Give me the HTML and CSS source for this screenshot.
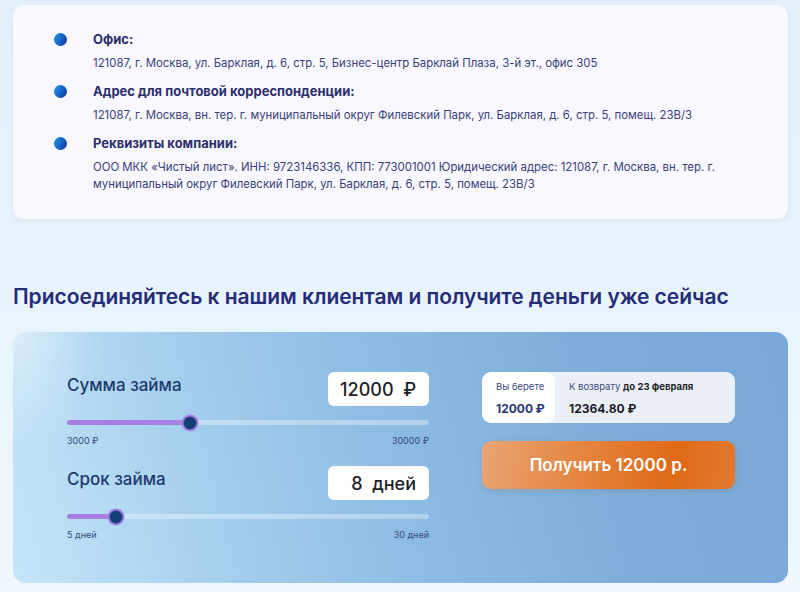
FILE: index.html
```html
<!DOCTYPE html>
<html lang="ru">
<head>
<meta charset="utf-8">
<link rel="stylesheet" href="styles.css">
</head>
<body>
<div class="page">
  <section class="info-card">
    <div class="info-row">
      <span class="dot"></span>
      <div class="info-body">
        <div class="info-title">Офис:</div>
        <div class="info-text">121087, г. Москва, ул. Барклая, д. 6, стр. 5, Бизнес-центр Барклай Плаза, 3-й эт., офис 305</div>
      </div>
    </div>
    <div class="info-row">
      <span class="dot"></span>
      <div class="info-body">
        <div class="info-title">Адрес для почтовой корреспонденции:</div>
        <div class="info-text">121087, г. Москва, вн. тер. г. муниципальный округ Филевский Парк, ул. Барклая, д. 6, стр. 5, помещ. 23В/3</div>
      </div>
    </div>
    <div class="info-row">
      <span class="dot"></span>
      <div class="info-body">
        <div class="info-title">Реквизиты компании:</div>
        <div class="info-text">ООО МКК «Чистый лист». ИНН: 9723146336, КПП: 773001001 Юридический адрес: 121087, г. Москва, вн. тер. г. муниципальный округ Филевский Парк, ул. Барклая, д. 6, стр. 5, помещ. 23В/3</div>
      </div>
    </div>
  </section>

  <h2 class="heading">Присоединяйтесь к нашим клиентам и получите деньги уже сейчас</h2>

  <section class="calc">
    <div class="calc-left">
      <div class="field">
        <div class="field-head">
          <span class="field-label">Сумма займа</span>
          <span class="field-value">12000&nbsp;&nbsp;₽</span>
        </div>
        <div class="slider">
          <div class="slider-fill" style="width: 34%"></div>
          <span class="slider-thumb" style="left: 34%"></span>
        </div>
        <div class="slider-limits"><span>3000 ₽</span><span>30000 ₽</span></div>
      </div>
      <div class="field">
        <div class="field-head">
          <span class="field-label">Срок займа</span>
          <span class="field-value">8&nbsp;&nbsp;дней</span>
        </div>
        <div class="slider">
          <div class="slider-fill" style="width: 13.5%"></div>
          <span class="slider-thumb" style="left: 13.5%"></span>
        </div>
        <div class="slider-limits"><span>5 дней</span><span>30 дней</span></div>
      </div>
    </div>
    <div class="calc-right">
      <div class="summary">
        <div class="sum-take">
          <div class="sum-label">Вы берете</div>
          <div class="sum-value">12000 ₽</div>
        </div>
        <div class="sum-return">
          <div class="sum-label">К возврату <b>до 23 февраля</b></div>
          <div class="sum-value dark">12364.80 ₽</div>
        </div>
      </div>
      <button class="get-btn">Получить 12000 р.</button>
    </div>
  </section>
</div>
</body>
</html>
```

FILE: styles.css
```css
* { box-sizing: border-box; }
html, body { margin: 0; padding: 0; }
body {
  width: 800px;
  height: 592px;
  overflow: hidden;
  font-family: Inter, "Noto Sans", sans-serif;
  background: linear-gradient(180deg, #e2f1fb 0%, #e8f4fc 50%, #f0f8fe 100%);
}
.page {
  padding: 5px 12px 0 13px;
}
.info-card {
  background: #f8f8fe;
  border-radius: 11px;
  padding: 26px 20px 26px 41px;
  box-shadow: 0 2px 6px rgba(120, 150, 200, 0.12);
  display: flex;
  flex-direction: column;
  gap: 11px;
}
.info-row {
  display: flex;
  gap: 26px;
}
.dot {
  flex: none;
  width: 13px;
  height: 13px;
  border-radius: 50%;
  margin-top: 2px;
  background: linear-gradient(120deg, #1a9be6 0%, #1666c8 50%, #0c2f8a 100%);
}
.info-title {
  font-size: 13px;
  font-weight: 700;
  color: #2d2f6b;
  line-height: 16px;
}
.info-text {
  margin-top: 8px;
  font-size: 11.4px;
  color: #3c3f7c;
  line-height: 17px;
}
.heading {
  margin: 64px 0 0 0;
  font-size: 21px;
  font-weight: 600;
  color: #262c78;
  line-height: 28px;
  letter-spacing: -0.05px;
}
.calc {
  margin-top: 21px;
  height: 251px;
  border-radius: 13px;
  background:
    radial-gradient(ellipse 90px 120px at 0% 0%, rgba(255,255,255,0.45), rgba(255,255,255,0) 100%),
    linear-gradient(75deg, #c6e6f9 0%, #a6cfee 25%, #8cbbe4 50%, #7eadd9 75%, #7aa9d8 100%);
  display: flex;
  padding: 40px 53px 0 54px;
  gap: 53px;
}
.calc-left {
  width: 362px;
  display: flex;
  flex-direction: column;
  gap: 20px;
}
.field-head {
  display: flex;
  justify-content: space-between;
  align-items: flex-start;
}
.field-label {
  font-size: 17px;
  font-weight: 500;
  color: #1d3a6c;
  margin-top: 3px;
}
.field-value {
  width: 101px;
  height: 34px;
  background: #fff;
  border-radius: 6px;
  display: flex;
  align-items: center;
  justify-content: flex-end;
  padding-right: 13px;
  font-size: 18px;
  font-weight: 500;
  color: #1e1e28;
}
.slider {
  position: relative;
  margin-top: 14px;
  height: 5px;
  border-radius: 3px;
  background: rgba(255, 255, 255, 0.35);
}
.slider-fill {
  height: 100%;
  border-radius: 3px;
  background: #a57fe2;
}
.slider-thumb {
  position: absolute;
  top: 50%;
  width: 17px;
  height: 17px;
  border-radius: 50%;
  background: #153e77;
  border: 2px solid #a57fe2;
  transform: translate(-50%, -50%);
}
.slider-limits {
  display: flex;
  justify-content: space-between;
  margin-top: 10px;
  font-size: 9px;
  color: #34497d;
}
.calc-right {
  width: 253px;
  display: flex;
  flex-direction: column;
  gap: 18px;
}
.summary {
  display: flex;
  height: 51px;
  border-radius: 9px;
  background: #ebf0f8;
  overflow: hidden;
}
.sum-take {
  width: 73px;
  background: #fff;
  border-radius: 9px;
  padding: 9px 0 0 14px;
}
.sum-return {
  padding: 9px 0 0 14px;
}
.sum-label {
  font-size: 9.5px;
  color: #3b4a82;
  line-height: 12px;
}
.sum-label b { color: #1d1d28; font-weight: 700; }
.sum-value {
  margin-top: 8px;
  font-size: 12px;
  font-weight: 700;
  color: #2b3572;
}
.sum-value.dark { color: #1d1d28; }
.get-btn {
  height: 48px;
  border: none;
  border-radius: 9px;
  background: linear-gradient(100deg, #e9a474 0%, #e4843f 40%, #df6916 75%, #e27a30 100%);
  font-family: Inter, "Noto Sans", sans-serif;
  font-size: 17px;
  font-weight: 600;
  color: #fff;
  box-shadow: 0 2px 6px rgba(150, 90, 40, 0.2);
}
```
